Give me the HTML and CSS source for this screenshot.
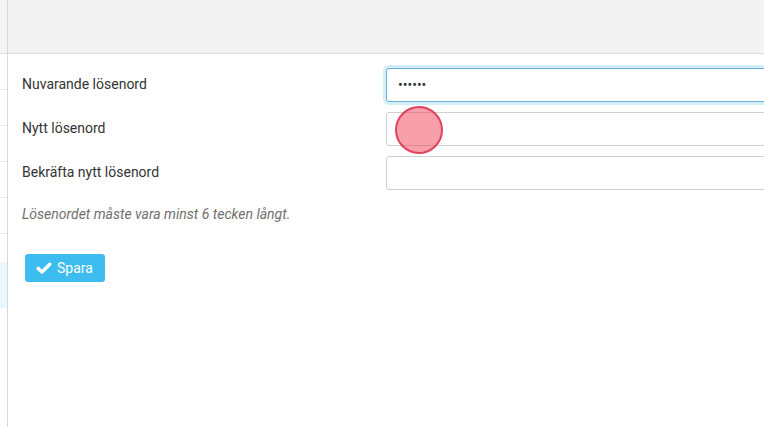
FILE: index.html
```html
<!DOCTYPE html>
<html lang="sv">
<head>
<meta charset="utf-8">
<title>Lösenord</title>
<link rel="stylesheet" href="styles.css">
</head>
<body>
<div class="app">
  <aside class="sidebar">
    <div class="side-head"></div>
    <ul class="side-list">
      <li></li><li></li><li></li><li></li><li></li>
      <li class="gap"></li>
      <li class="active"></li>
    </ul>
  </aside>
  <main class="main">
    <header class="topbar"></header>
    <form class="form">
      <div class="row">
        <label class="label">Nuvarande lösenord</label>
        <div class="field"><input class="input focus" type="password" value="123456"></div>
      </div>
      <div class="row">
        <label class="label">Nytt lösenord</label>
        <div class="field"><input class="input" type="password"></div>
      </div>
      <div class="row">
        <label class="label">Bekräfta nytt lösenord</label>
        <div class="field"><input class="input" type="password"></div>
      </div>
      <p class="help">Lösenordet måste vara minst 6 tecken långt.</p>
      <div class="actions">
        <button class="btn" type="button">
          <svg class="check" viewBox="0 0 16 16" width="16" height="16"><path d="M2.2 8.4 L6 12 L13.8 4.2" fill="none" stroke="#fff" stroke-width="3.4" stroke-linecap="round" stroke-linejoin="round"/></svg>
          <span>Spara</span>
        </button>
      </div>
    </form>
    <div class="click-dot"></div>
  </main>
</div>
</body>
</html>
```
FILE: styles.css
```css
* { box-sizing: border-box; }
html, body { margin: 0; padding: 0; height: 100%; }
body {
  font-family: Roboto, "Liberation Sans", Arial, sans-serif;
  font-size: 14px;
  color: #333;
  background: #fff;
  overflow: hidden;
}
.app { display: flex; height: 427px; }
.sidebar {
  width: 8px;
  flex: none;
  border-right: 1px solid #d8d8d8;
  background: #fff;
}
.side-head { height: 54px; background: #f3f3f3; border-bottom: 1px solid #dedede; }
.side-list { list-style: none; margin: 0; padding: 0; }
.side-list li { height: 36px; border-bottom: 1px solid #eaeaea; }
.side-list li.gap { height: 28px; border-bottom: none; }
.side-list li.active { height: 46px; background: #eaf6fd; border-bottom: none; }
.main { flex: 1; position: relative; overflow: hidden; min-width: 0; }
.topbar { height: 54px; background: #f3f3f3; border-bottom: 1px solid #dcdcdc; }
.form { padding: 14px 0 0 14px; }
.row { display: flex; align-items: center; height: 34px; margin-bottom: 10px; }
.label { width: 364px; flex: none; font-size: 14px; color: #333; margin-top: -2px; }
.field { flex: 1; min-width: 0; }
.input {
  display: block;
  width: 600px;
  height: 34px;
  border: 1px solid #cfcfcf;
  border-radius: 3px;
  padding: 0 11px;
  font-family: inherit;
  font-size: 14px;
  color: #333;
  background: #fff;
  outline: none;
}
.input.focus {
  border-color: #66b5d9;
  box-shadow: 0 0 0 3px rgba(102, 190, 233, 0.28);
}
.help {
  margin: 14px 0 0 0;
  font-style: italic;
  color: #707070;
  font-size: 14px;
  line-height: 20px;
}
.actions { padding: 30px 0 0 3px; }
.btn {
  display: inline-flex;
  align-items: center;
  gap: 5px;
  height: 28px;
  padding: 0 12px 0 11px;
  border: none;
  border-radius: 3px;
  background: #3dbcf0;
  color: #fff;
  font-family: inherit;
  font-size: 14px;
}
.check { display: block; }
.click-dot {
  position: absolute;
  left: 387px;
  top: 106px;
  width: 48px;
  height: 48px;
  border-radius: 50%;
  background: rgba(241, 63, 89, 0.5);
  border: 2px solid rgba(220, 50, 80, 0.85);
}
```
